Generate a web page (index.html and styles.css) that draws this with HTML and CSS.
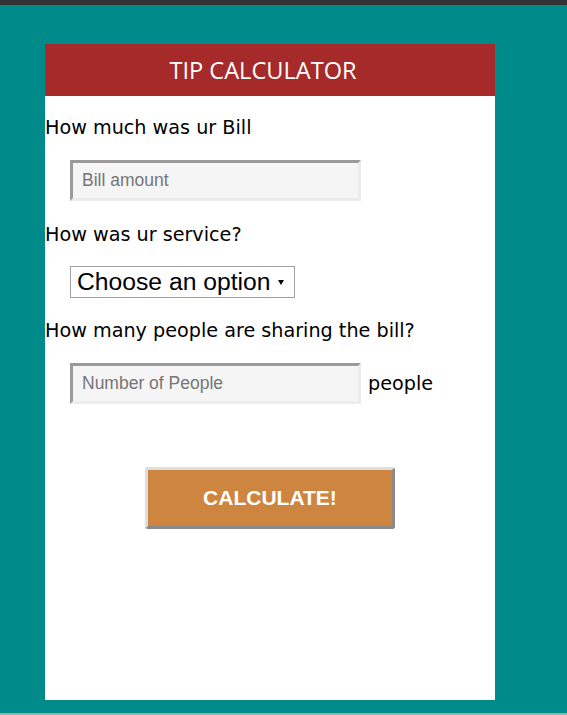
FILE: index.html
```html
<!DOCTYPE html>
<html>
<head>
<meta charset="utf-8">
<link rel="stylesheet" href="styles.css">
</head>
<body>
<div class="topbar"></div>
<main class="stage">
  <section class="card">
    <header class="card-head">TIP CALCULATOR</header>
    <div class="card-body">
      <p class="label">How much was ur Bill</p>
      <div class="field-row">
        <div class="input"><span class="placeholder">Bill amount</span></div>
      </div>
      <p class="label">How was ur service?</p>
      <div class="field-row select-row">
        <div class="select"><span>Choose an option</span><span class="arrow"></span></div>
      </div>
      <p class="label">How many people are sharing the bill?</p>
      <div class="field-row">
        <div class="input"><span class="placeholder">Number of People</span></div>
        <span class="unit">people</span>
      </div>
      <div class="btn-row">
        <div class="btn">CALCULATE!</div>
      </div>
    </div>
  </section>
</main>
<div class="bottombar"></div>
</body>
</html>
```

FILE: styles.css
```css
html, body {
  margin: 0;
  padding: 0;
}
body {
  width: 567px;
  height: 715px;
  display: flex;
  flex-direction: column;
  background: #008b8a;
  overflow: hidden;
}
.topbar {
  height: 5px;
  background: #323436;
  flex: none;
}
.bottombar {
  height: 2px;
  background: #a9a9a9;
  flex: none;
}
.stage {
  flex: 1;
  padding: 39px 0 0 45px;
}
.card {
  width: 450px;
  height: 656px;
  background: #ffffff;
}
.card-head {
  height: 52px;
  background: #a62a2a;
  color: #ffffff;
  font-family: "Open Sans", sans-serif;
  font-size: 23.6px;
  display: flex;
  align-items: center;
  justify-content: center;
  padding-right: 14px;
}
.card-body {
  display: flex;
  flex-direction: column;
}
.label {
  margin: 0;
  font-family: "DejaVu Sans", sans-serif;
  font-size: 19.2px;
  line-height: 22px;
  color: #000;
}
.label:first-child {
  margin-top: 21px;
}
.field-row {
  display: flex;
  align-items: center;
  padding-left: 25px;
  margin: 21px 0 23px;
}
.select-row {
  margin: 20px 0 22px;
}
.input {
  width: 276px;
  height: 35px;
  background: #f5f5f5;
  border-style: solid;
  border-width: 3px;
  border-color: #9a9a9a #ececec #ececec #9a9a9a;
  display: flex;
  align-items: center;
  padding-left: 9px;
}
.placeholder {
  font-family: "Liberation Sans", Arial, sans-serif;
  font-size: 17.5px;
  color: #757575;
}
.unit {
  font-family: "DejaVu Sans", sans-serif;
  font-size: 19.2px;
  margin-left: 7px;
  color: #000;
}
.select {
  height: 30px;
  border: 1px solid #a0a0a0;
  display: flex;
  align-items: center;
  padding: 0 10px 0 6px;
  font-family: "Liberation Sans", Arial, sans-serif;
  font-size: 24.7px;
  color: #000;
  gap: 7px;
}
.arrow {
  width: 0;
  height: 0;
  border-left: 3px solid transparent;
  border-right: 3px solid transparent;
  border-top: 5px solid #000;
  margin-top: 1px;
}
.btn-row {
  display: flex;
  justify-content: center;
  margin-top: 40px;
}
.btn {
  width: 244px;
  height: 56px;
  background: #cd853f;
  border-style: solid;
  border-width: 3px;
  border-color: #dedede #8a8a8a #8a8a8a #dedede;
  border-radius: 3px;
  color: #fff;
  font-family: "Liberation Sans", Arial, sans-serif;
  font-weight: bold;
  font-size: 21px;
  display: flex;
  align-items: center;
  justify-content: center;
}
```
